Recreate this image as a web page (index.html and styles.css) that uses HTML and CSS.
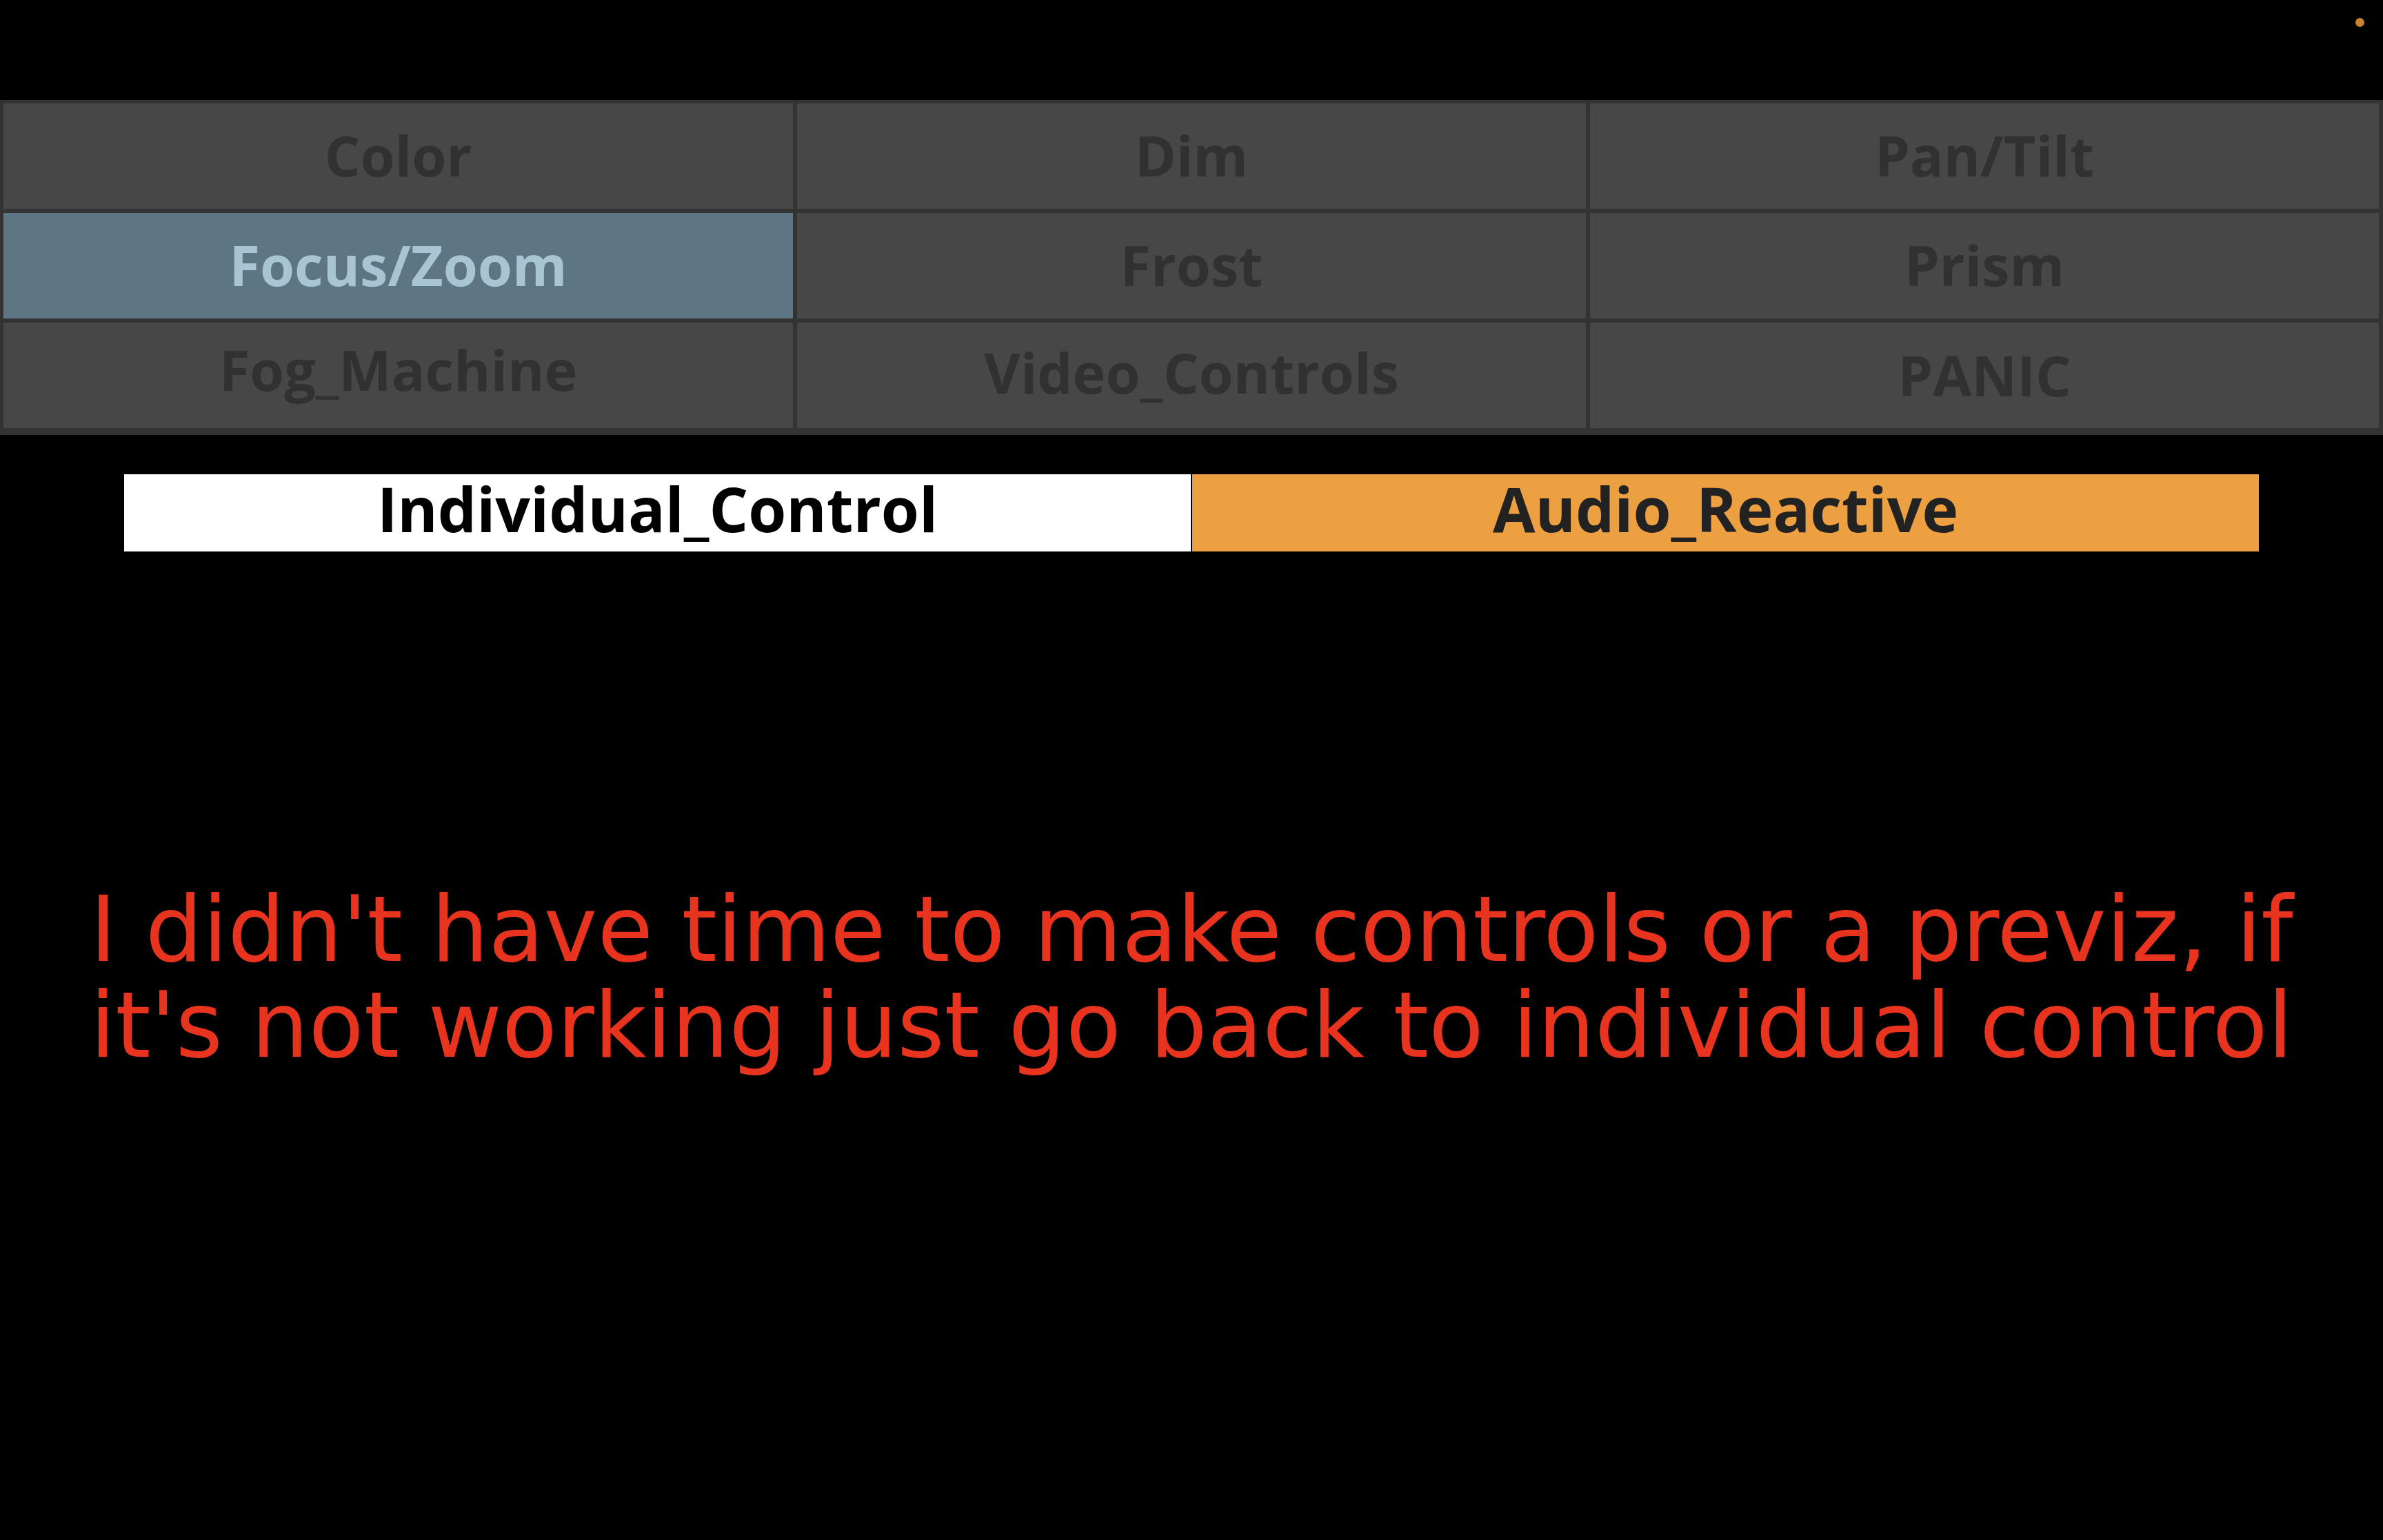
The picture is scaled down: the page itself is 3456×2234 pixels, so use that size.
FILE: index.html
```html
<!DOCTYPE html>
<html lang="en">
<head>
<meta charset="utf-8">
<title>Control Surface</title>
<link rel="stylesheet" href="styles.css">
</head>
<body>
<div class="page">
  <header class="topbar">
    <span class="status-dot"></span>
  </header>
  <nav class="pages">
    <div class="cell"><span>Color</span></div>
    <div class="cell"><span>Dim</span></div>
    <div class="cell"><span>Pan/Tilt</span></div>
    <div class="cell cell-active"><span>Focus/Zoom</span></div>
    <div class="cell"><span>Frost</span></div>
    <div class="cell"><span>Prism</span></div>
    <div class="cell cell-high"><span>Fog_Machine</span></div>
    <div class="cell cell-mid"><span>Video_Controls</span></div>
    <div class="cell cell-low"><span>PANIC</span></div>
  </nav>
  <div class="toggle">
    <div class="toggle-opt toggle-white">Individual_Control</div>
    <div class="toggle-opt toggle-orange">Audio_Reactive</div>
  </div>
  <p class="notice">I didn't have time to make controls or a previz, if<br>it's not working just go back to individual control</p>
</div>
</body>
</html>
```

FILE: styles.css
```css
html, body {
  margin: 0;
  padding: 0;
  background: #000;
}

.page {
  width: 3456px;
  height: 2234px;
  display: flex;
  flex-direction: column;
  background: #000;
  overflow: hidden;
}

.topbar {
  height: 145px;
  display: flex;
  justify-content: flex-end;
  align-items: flex-start;
  padding: 26px 27px 0 0;
  box-sizing: border-box;
}

.status-dot {
  width: 13px;
  height: 13px;
  border-radius: 50%;
  background: #ca8232;
}

.pages {
  display: grid;
  grid-template-columns: 1145px 1144px 1144px;
  grid-template-rows: 153px 153px 153px;
  column-gap: 6px;
  row-gap: 6px;
  padding: 5px 6px 10px 5px;
  background: #333333;
}

.cell {
  background: #474747;
  display: flex;
  align-items: center;
  justify-content: center;
  font-family: "Open Sans", "Liberation Sans", sans-serif;
  font-weight: 700;
  font-size: 81px;
  line-height: 1;
  color: #313131;
  padding-bottom: 5px;
  box-sizing: border-box;
}

.cell-active {
  background: #5e7583;
  color: #a9c5d3;
}

.cell-high {
  padding-bottom: 18px;
}

.cell-mid {
  padding-bottom: 10px;
}

.cell-low {
  padding-bottom: 2px;
}

.toggle {
  margin: 57px 180px 0 180px;
  height: 112px;
  display: flex;
  gap: 2px;
}

.toggle-opt {
  flex: 1;
  display: flex;
  align-items: center;
  justify-content: center;
  font-family: "Open Sans", "Liberation Sans", sans-serif;
  font-weight: 700;
  font-size: 89px;
  line-height: 1;
  padding-bottom: 14px;
  box-sizing: border-box;
}

.toggle-white {
  background: #ffffff;
  color: #000000;
}

.toggle-orange {
  background: #eca042;
  color: #222222;
}

.notice {
  margin: 479px 0 0 0;
  text-align: center;
  font-family: "DejaVu Sans", Verdana, sans-serif;
  font-size: 131px;
  line-height: 139px;
  color: #e8341f;
}
```
